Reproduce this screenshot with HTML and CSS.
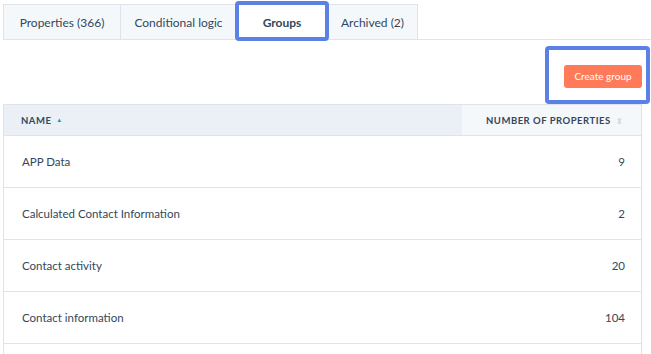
FILE: index.html
```html
<!DOCTYPE html>
<html lang="en">
<head>
    <meta charset="UTF-8">
    <title>Property groups</title>
    <link rel="stylesheet" href="styles.css">
</head>
<body>
    <div class="tabs">
        <div class="tab">Properties (366)</div>
        <div class="tab">Conditional logic</div>
        <div class="tab active">Groups</div>
        <div class="tab">Archived (2)</div>
    </div>

    <div class="actions">
        <div class="highlight-btn">
            <button>Create group</button>
        </div>
    </div>

    <table class="groups">
        <thead>
            <tr>
                <th class="sorted">NAME <span class="sort up">&#9650;</span></th>
                <th class="num">NUMBER OF PROPERTIES <span class="sort">&#8661;</span></th>
            </tr>
        </thead>
        <tbody>
            <tr><td>APP Data</td><td class="num">9</td></tr>
            <tr><td>Calculated Contact Information</td><td class="num">2</td></tr>
            <tr><td>Contact activity</td><td class="num">20</td></tr>
            <tr><td>Contact information</td><td class="num">104</td></tr>
            <tr><td>&nbsp;</td><td class="num"></td></tr>
        </tbody>
    </table>
</body>
</html>
```

FILE: styles.css
```css
body {
    margin: 0;
    padding: 0 9px 0 3px;
    font-family: 'Lato', 'Noto Sans', sans-serif;
    color: #33475b;
    background: #fff;
}

.tabs {
    display: flex;
    margin-top: 4px;
    margin-right: -9px;
    border-bottom: 1px solid #dfe3eb;
    height: 35px;
}

.tab {
    width: 117px;
    box-sizing: border-box;
    background: #f5f8fa;
    border: 1px solid #dfe3eb;
    border-bottom: none;
    border-left: none;
    font-size: 12px;
    display: flex;
    align-items: center;
    justify-content: center;
    color: #33475b;
}

.tab:first-child {
    border-left: 1px solid #dfe3eb;
    width: 118px;
}

.tab:nth-child(2) {
    width: 116px;
}

.tab.active {
    width: 90px;
    background: #fff;
    font-weight: bold;
    position: relative;
    margin-bottom: -1px;
    border: none;
}

.tab.active::after {
    content: "";
    position: absolute;
    left: -2px;
    right: -2px;
    top: -3px;
    bottom: -1px;
    border: 4px solid #5b80e6;
    border-radius: 4px;
}

.tab:last-child {
    width: 91px;
    border-left: 1px solid #dfe3eb;
}

.actions {
    display: flex;
    justify-content: flex-end;
    margin-top: 6px;
    margin-right: -8px;
    height: 58px;
}

.highlight-btn {
    width: 105px;
    box-sizing: border-box;
    border: 4px solid #5b80e6;
    border-radius: 4px;
    display: flex;
    align-items: center;
    justify-content: flex-end;
    padding: 2px 4px 0 0;
}

button {
    background: #ff7a59;
    color: #fff;
    border: none;
    border-radius: 3px;
    font-family: inherit;
    font-size: 10px;
    width: 78px;
    height: 23px;
    padding: 0;
}

.groups {
    width: 100%;
    border-collapse: collapse;
    border-left: 1px solid #dfe3eb;
    border-right: 1px solid #dfe3eb;
}

.groups th {
    height: 31px;
    box-sizing: border-box;
    background: #eaf0f6;
    font-size: 9.5px;
    font-weight: bold;
    letter-spacing: 0.5px;
    text-align: left;
    padding: 0 17px;
    border-top: 1px solid #dfe3eb;
    color: #33475b;
}

.groups th.num {
    background: #f5f8fa;
    width: 180px;
    text-align: right;
    padding-right: 18px;
}

.sort {
    color: #cbd6e2;
    font-size: 8px;
    margin-left: 2px;
}

.sort.up {
    color: #00a4bd;
    font-size: 6px;
    vertical-align: 2px;
}

.groups td {
    height: 51px;
    padding: 0 18px;
    font-size: 11.5px;
    border-top: 1px solid #dfe3eb;
}

.groups td.num {
    text-align: right;
    padding-right: 16px;
}
```
